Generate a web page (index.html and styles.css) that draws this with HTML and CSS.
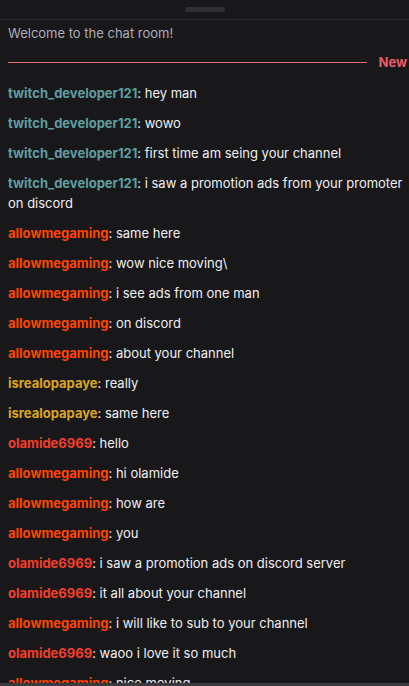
FILE: index.html
```html
<!DOCTYPE html>
<html lang="en">
<head>
    <meta charset="UTF-8">
    <meta name="viewport" content="width=device-width, initial-scale=1.0">
    <title>Chat</title>
    <link rel="stylesheet" href="styles.css">
</head>
<body>
    <div class="chat-panel">
        <div class="drag-bar">
            <div class="handle"></div>
        </div>

        <div class="chat-list">
            <div class="welcome">Welcome to the chat room!</div>

            <div class="new-divider">
                <span class="line"></span>
                <span class="label">New</span>
            </div>

            <div class="msg"><span class="name teal">twitch_developer121</span>: hey man</div>
            <div class="msg"><span class="name teal">twitch_developer121</span>: wowo</div>
            <div class="msg"><span class="name teal">twitch_developer121</span>: first time am seing your channel</div>
            <div class="msg"><span class="name teal">twitch_developer121</span>: i saw a promotion ads from your promoter on discord</div>
            <div class="msg"><span class="name orange">allowmegaming</span>: same here</div>
            <div class="msg"><span class="name orange">allowmegaming</span>: wow nice moving\</div>
            <div class="msg"><span class="name orange">allowmegaming</span>: i see ads from one man</div>
            <div class="msg"><span class="name orange">allowmegaming</span>: on discord</div>
            <div class="msg"><span class="name orange">allowmegaming</span>: about your channel</div>
            <div class="msg"><span class="name gold">isrealopapaye</span>: really</div>
            <div class="msg"><span class="name gold">isrealopapaye</span>: same here</div>
            <div class="msg"><span class="name red">olamide6969</span>: hello</div>
            <div class="msg"><span class="name orange">allowmegaming</span>: hi olamide</div>
            <div class="msg"><span class="name orange">allowmegaming</span>: how are</div>
            <div class="msg"><span class="name orange">allowmegaming</span>: you</div>
            <div class="msg"><span class="name red">olamide6969</span>: i saw a promotion ads on discord server</div>
            <div class="msg"><span class="name red">olamide6969</span>: it all about your channel</div>
            <div class="msg"><span class="name orange">allowmegaming</span>: i will like to sub to your channel</div>
            <div class="msg"><span class="name red">olamide6969</span>: waoo i love it so much</div>
            <div class="msg"><span class="name orange">allowmegaming</span>: nice moving</div>
        </div>

        <div class="bottom-bar"></div>
    </div>
</body>
</html>
```

FILE: styles.css
```css
html, body {
    margin: 0;
    padding: 0;
    height: 100%;
    background-color: #18181b;
}
body {
    font-family: Inter, "Noto Sans", Arial, sans-serif;
    font-size: 13px;
    color: #efeff1;
    overflow: hidden;
}
.chat-panel {
    display: flex;
    flex-direction: column;
    height: 686px;
}
.drag-bar {
    height: 19px;
    display: flex;
    justify-content: center;
    align-items: flex-start;
    border-bottom: 1px solid #26262b;
    flex-shrink: 0;
}
.handle {
    width: 40px;
    height: 5px;
    margin-top: 7px;
    border-radius: 2px;
    background-color: #2e2e33;
}
.chat-list {
    flex: 1;
    overflow: hidden;
}
.welcome {
    padding: 3px 8px 5px;
    line-height: 20px;
    color: #adadb8;
}
.new-divider {
    display: flex;
    align-items: center;
    gap: 11px;
    height: 20px;
    margin: 4px 2px 6px 8px;
}
.new-divider .line {
    flex: 1;
    height: 1px;
    background-color: #eb6a74;
}
.new-divider .label {
    color: #eb5a66;
    font-weight: 700;
    line-height: 20px;
}
.msg {
    padding: 5px 2px 5px 8px;
    line-height: 20px;
}
.name {
    font-weight: 700;
}
.teal {
    color: #5f9ea0;
}
.orange {
    color: #ff4500;
}
.red {
    color: #f43e2a;
}
.gold {
    color: #daa520;
}
.bottom-bar {
    height: 3px;
    background-color: #3a3a3f;
    flex-shrink: 0;
}
```
